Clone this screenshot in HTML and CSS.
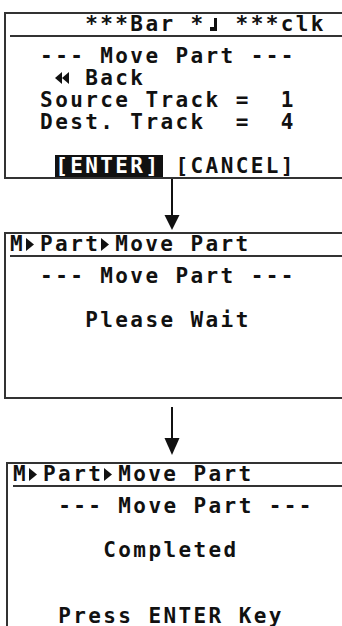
FILE: index.html
```html
<!DOCTYPE html>
<html lang="en">
<head>
  <meta charset="UTF-8">
  <title>Move Part</title>
  <link rel="stylesheet" href="styles.css">
</head>
<body>
  <div class="screen first">
    <div class="bar">     ***Bar *<svg class="cell" viewBox="0 0 15 21"><rect x="8" y="4" width="3" height="13"/><rect x="4" y="13" width="7" height="4"/></svg> ***clk</div>
    <div class="lines">
      <div class="row">  --- Move Part ---</div>
      <div class="row">   <svg class="cell" viewBox="0 0 15 22"><polygon points="0,11 7,5 7,17"/><polygon points="7,11 14,5 14,17"/></svg> Back</div>
      <div class="row">  Source Track =  1</div>
      <div class="row">  Dest. Track  =  4</div>
      <div class="row"></div>
      <div class="row">   <span class="sel">[ENTER]</span> [CANCEL]</div>
    </div>
  </div>

  <div class="arrow">
    <svg width="16" height="53" viewBox="0 0 16 53"><rect x="7" y="0" width="2" height="38"/><polygon points="0.5,36 15.5,36 8,51"/></svg>
  </div>

  <div class="screen">
    <div class="bar">M<svg class="cell" viewBox="0 0 15 21"><polygon points="1,4 1,17 9,10.5"/></svg>Part<svg class="cell" viewBox="0 0 15 21"><polygon points="1,4 1,17 9,10.5"/></svg>Move Part</div>
    <div class="lines">
      <div class="row">  --- Move Part ---</div>
      <div class="row"></div>
      <div class="row">     Please Wait</div>
      <div class="row"></div>
      <div class="row"></div>
      <div class="row"></div>
    </div>
  </div>

  <div class="arrow">
    <svg width="16" height="63" viewBox="0 0 16 63"><rect x="7" y="8" width="2" height="33"/><polygon points="0.5,39 15.5,39 8,56"/></svg>
  </div>

  <div class="screen last">
    <div class="bar">M<svg class="cell" viewBox="0 0 15 21"><polygon points="1,4 1,17 9,10.5"/></svg>Part<svg class="cell" viewBox="0 0 15 21"><polygon points="1,4 1,17 9,10.5"/></svg>Move Part</div>
    <div class="lines">
      <div class="row">   --- Move Part ---</div>
      <div class="row"></div>
      <div class="row">      Completed</div>
      <div class="row"></div>
      <div class="row"></div>
      <div class="row">   Press ENTER Key</div>
    </div>
  </div>
</body>
</html>
```

FILE: styles.css
```css
* {
  box-sizing: border-box;
}

body {
  margin: 0;
  background: #fff;
  color: #111;
  font-family: "DejaVu Sans Mono", monospace;
  font-size: 21px;
  font-weight: bold;
  letter-spacing: 2.4px;
  overflow: hidden;
}

.screen {
  width: 350px;
  height: 167px;
  margin-left: 4px;
  padding-left: 4px;
  border: 2px solid #333;
  border-right: none;
}

.screen.first {
  margin-top: 12px;
}

.screen.last {
  margin-left: 6px;
  padding-left: 5px;
}

.bar {
  height: 23px;
  line-height: 21px;
  border-bottom: 2px solid #333;
  white-space: pre;
}

.lines {
  padding-top: 8px;
}

.row {
  height: 22px;
  line-height: 22px;
  white-space: pre;
}

.cell {
  width: 15px;
  height: 21px;
  vertical-align: top;
  fill: #111;
}

.row .cell {
  height: 22px;
}

.sel {
  display: inline-block;
  background: #111;
  color: #fff;
  margin-right: -2.4px;
  padding-right: 2.4px;
}

.arrow {
  display: flex;
  justify-content: center;
  padding-left: 2px;
}

.arrow svg {
  display: block;
  fill: #111;
}
```
